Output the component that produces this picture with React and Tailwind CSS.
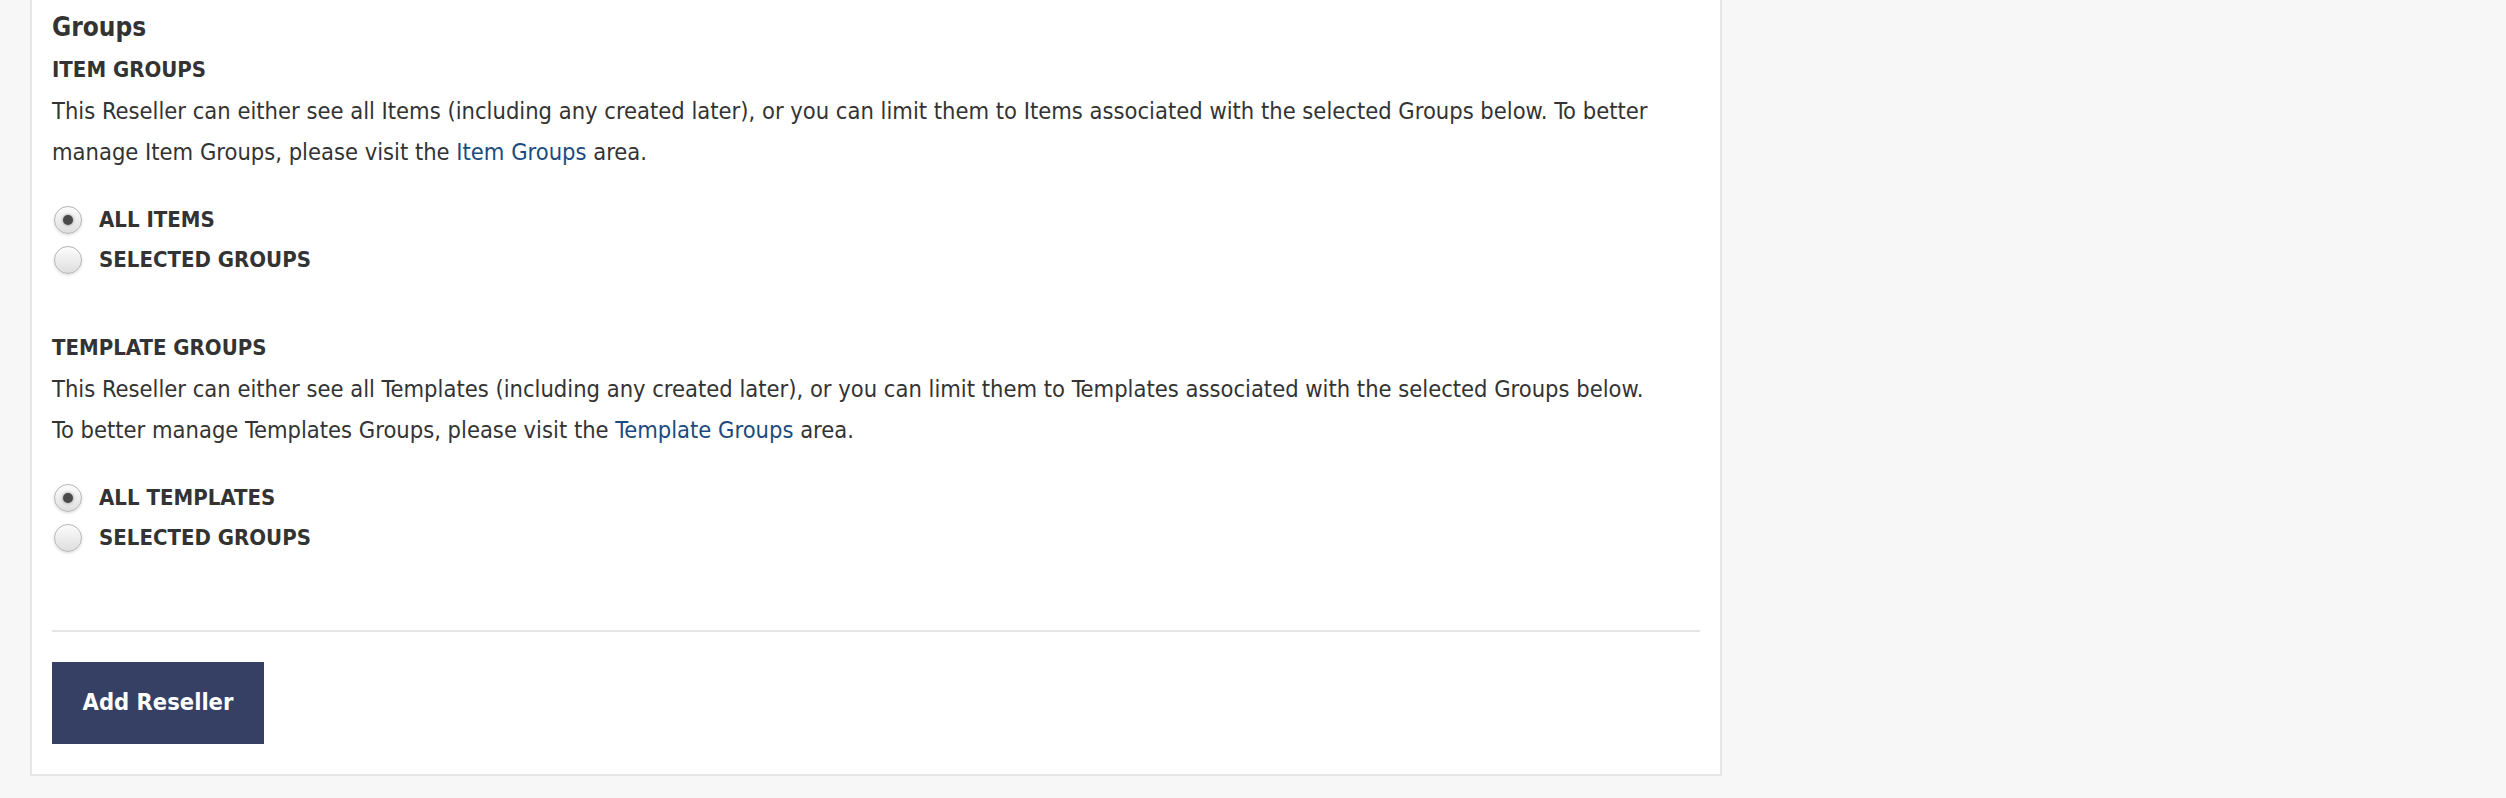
import React from "react";

function Radio({ checked, label }) {
  return (
    <label className="flex items-center h-[40px] leading-[40px]">
      <span className="ml-[2px] w-[28px] h-[28px] rounded-full border border-[#b5b5b5] bg-gradient-to-b from-[#fcfcfc] to-[#dedede] shadow-[0_1px_3px_rgba(0,0,0,0.15),inset_0_1px_1px_rgba(255,255,255,0.9)] flex items-center justify-center shrink-0">
        {checked && (
          <span className="w-[10px] h-[10px] rounded-full bg-[#4a4a4a] shadow-[0_0_3px_rgba(0,0,0,0.45)]" />
        )}
      </span>
      <span className="ml-[17px] text-[22px] font-bold text-[#333333] uppercase">{label}</span>
    </label>
  );
}

function Section({ title, children, options, className }) {
  return (
    <div className={className}>
      <h3 className="text-[22px] leading-[32px] font-bold text-[#333333] uppercase">{title}</h3>
      <p className="mt-[5px] text-[23.5px] leading-[41px] text-[#333333]">{children}</p>
      <div className="mt-[27px] flex flex-col">
        {options.map((o, i) => (
          <Radio key={o} label={o} checked={i === 0} />
        ))}
      </div>
    </div>
  );
}

export default function App() {
  return (
    <div
      className="h-[798px] bg-[#f7f7f7] pl-[30px] overflow-hidden"
      style={{ fontFamily: '"DejaVu Sans Condensed", "DejaVu Sans", sans-serif' }}
    >
      <div className="w-[1692px] bg-white border-x-2 border-b-2 border-[#e6e6e6] pt-[7px] px-[20px] pb-[30px]">
        <h2 className="text-[26px] leading-[40px] font-bold text-[#333333]">Groups</h2>
        <Section
          className="mt-[7px]"
          title="Item Groups"
          options={["All Items", "Selected Groups"]}
        >
          This Reseller can either see all Items (including any created later), or you can limit them to Items
          associated with the selected Groups below. To better
          <br />
          manage Item Groups, please visit the <a className="text-[#1b4b7e]">Item Groups</a> area.
        </Section>
        <Section
          className="mt-[52px]"
          title="Template Groups"
          options={["All Templates", "Selected Groups"]}
        >
          This Reseller can either see all Templates (including any created later), or you can limit them to
          Templates associated with the selected Groups below.
          <br />
          To better manage Templates Groups, please visit the <a className="text-[#1b4b7e]">Template Groups</a> area.
        </Section>
        <hr className="mt-[72px] border-0 h-[2px] bg-[#e5e5e5]" />
        <button className="mt-[30px] w-[212px] h-[82px] bg-[#364064] text-white text-[23.5px] font-bold flex items-center justify-center">
          Add Reseller
        </button>
      </div>
    </div>
  );
}
